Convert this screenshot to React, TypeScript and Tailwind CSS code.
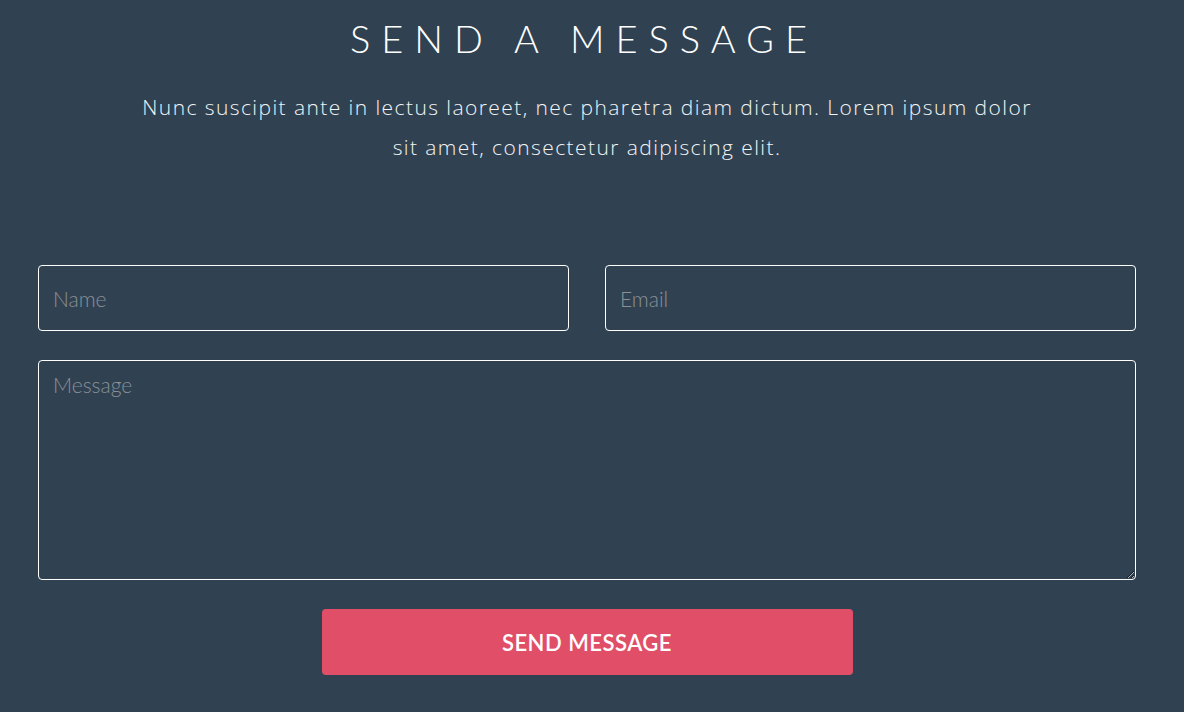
import React from 'react';

const body = { fontFamily: '"Open Sans", "Noto Sans", sans-serif' };
const lato = { fontFamily: 'Lato, "Noto Sans", sans-serif' };

const fieldClass =
  'w-full rounded-[4px] border border-white bg-transparent px-[14px] text-[21px] font-light text-white placeholder:text-[#8b9096] outline-none';

const App: React.FC = () => {
  return (
    <div className="min-h-[712px] w-[1184px] bg-[#304252]" style={lato}>
      <div className="ml-[38px] w-[1098px] pt-[14px]">
        <section className="flex flex-col items-center text-center">
          <h2 className="pr-[6px] text-[38px] font-light leading-[48px] tracking-[11px] text-white">
            SEND A MESSAGE
          </h2>
          <p
            className="mt-[25px] w-[900px] text-[21px] font-light leading-[40px] tracking-[1.42px] text-[#f2f4f6]"
            style={body}
          >
            Nunc suscipit ante in lectus laoreet, nec pharetra diam dictum. Lorem ipsum dolor sit amet, consectetur
            adipiscing elit.
          </p>
        </section>

        <form className="mt-[98px] flex flex-col" onSubmit={(e) => e.preventDefault()}>
          <div className="grid grid-cols-2 gap-[36px]">
            <input className={`${fieldClass} h-[66px]`} placeholder="Name" style={lato} type="text" />
            <input className={`${fieldClass} h-[66px]`} placeholder="Email" style={lato} type="email" />
          </div>
          <textarea
            className={`${fieldClass} mt-[29px] h-[220px] resize-y pt-[8px]`}
            placeholder="Message"
            style={lato}
          />
          <div className="mt-[29px] flex justify-center">
            <button
              className="h-[66px] w-[531px] rounded-[4px] bg-[#e14e67] text-[22px] font-semibold tracking-[0.5px] text-white"
              style={lato}
              type="submit"
            >
              SEND MESSAGE
            </button>
          </div>
        </form>
      </div>
    </div>
  );
};

export default App;
